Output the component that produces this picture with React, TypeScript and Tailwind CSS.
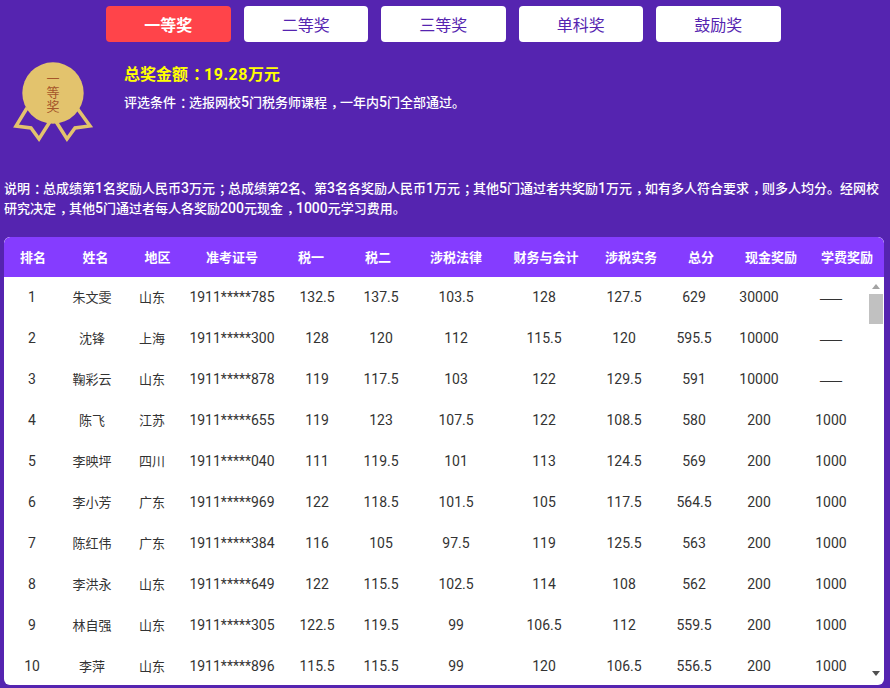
import React from 'react';

const tabs = ['一等奖', '二等奖', '三等奖', '单科奖', '鼓励奖'];

const headers = ['排名', '姓名', '地区', '准考证号', '税一', '税二', '涉税法律', '财务与会计', '涉税实务', '总分', '现金奖励', '学费奖励'];

const rows = [
  ['1', '朱文雯', '山东', '1911*****785', '132.5', '137.5', '103.5', '128', '127.5', '629', '30000', '——'],
  ['2', '沈锋', '上海', '1911*****300', '128', '120', '112', '115.5', '120', '595.5', '10000', '——'],
  ['3', '鞠彩云', '山东', '1911*****878', '119', '117.5', '103', '122', '129.5', '591', '10000', '——'],
  ['4', '陈飞', '江苏', '1911*****655', '119', '123', '107.5', '122', '108.5', '580', '200', '1000'],
  ['5', '李映坪', '四川', '1911*****040', '111', '119.5', '101', '113', '124.5', '569', '200', '1000'],
  ['6', '李小芳', '广东', '1911*****969', '122', '118.5', '101.5', '105', '117.5', '564.5', '200', '1000'],
  ['7', '陈红伟', '广东', '1911*****384', '116', '105', '97.5', '119', '125.5', '563', '200', '1000'],
  ['8', '李洪永', '山东', '1911*****649', '122', '115.5', '102.5', '114', '108', '562', '200', '1000'],
  ['9', '林自强', '山东', '1911*****305', '122.5', '119.5', '99', '106.5', '112', '559.5', '200', '1000'],
  ['10', '李萍', '山东', '1911*****896', '115.5', '115.5', '99', '120', '106.5', '556.5', '200', '1000'],
];

// digits run wider than the CJK font's, and the reference centres ，：；
const Mixed: React.FC<{ text: string }> = ({ text }) => (
  <>
    {text.split(/(\d+|[，：；])/).map((part, i) => {
      if (/^\d+$/.test(part)) {
        return <span key={i} className="font-['Roboto',sans-serif] text-[14px]">{part}</span>;
      }
      if (/^[，：；]$/.test(part)) {
        return <span key={i} className="inline-block translate-x-1">{part}</span>;
      }
      return part;
    })}
  </>
);

const Medal = () => (
  <svg width="106" height="90" viewBox="0 0 106 90" className="shrink-0">
    <g fill="none" stroke="#e3c36d" strokeWidth="3.5" strokeLinejoin="miter">
      <polyline points="27,46 16,64 31,66 39,77 51,58" />
      <polyline points="77,46 90,64 75,66 67,77 55,58" />
    </g>
    <circle cx="53" cy="31" r="30.7" fill="#e3c36d" />
    <g fill="#a5562a" fontSize="13" textAnchor="middle">
      <text x="53" y="21">一</text>
      <text x="53" y="35">等</text>
      <text x="53" y="49">奖</text>
    </g>
  </svg>
);

const cellClass = (i: number, cell: string) => {
  if (cell === '——') return "font-['Noto_Sans_CJK_SC',sans-serif] text-[14px]";
  if (i === 1 || i === 2) return 'pb-0.5 text-[13px]';
  return "font-['Roboto',sans-serif] text-[14px]";
};

export default function App() {
  return (
    <div className="h-[688px] w-[890px] overflow-hidden bg-[#5524b0] font-['Noto_Sans_CJK_SC','Liberation_Sans',sans-serif]">
      <div className="flex gap-[13px] pl-[106px] pt-1.5">
        {tabs.map((tab, i) => (
          <button
            key={tab}
            className={
              i === 0
                ? 'h-9 w-[124.5px] rounded-sm bg-[#ff444a] text-base font-bold text-white'
                : 'h-9 w-[124.5px] rounded-sm bg-white text-base text-[#5524b0]'
            }
          >
            {tab}
          </button>
        ))}
      </div>

      <div className="mt-5 flex h-[116px] items-start">
        <Medal />
        <div className="ml-[18px]">
          <h2 className="text-base leading-[22px] font-bold text-[#ffff00]">
            总奖金额<span className="inline-block translate-x-[5px]">：</span>
            <span className="font-['Roboto',sans-serif] tracking-[0.5px]">19.28</span>万元
          </h2>
          <p className="mt-1.5 text-[13px] leading-5 font-medium text-white">
            <Mixed text="评选条件：选报网校5门税务师课程，一年内5门全部通过。" />
          </p>
        </div>
      </div>

      <p className="h-[59px] px-1 text-[13px] leading-5 font-medium text-white">
        <Mixed text="说明：总成绩第1名奖励人民币3万元；总成绩第2名、第3名各奖励人民币1万元；其他5门通过者共奖励1万元，如有多人符合要求，则多人均分。经网校研究决定，其他5门通过者每人各奖励200元现金，1000元学习费用。" />
      </p>

      <div className="mx-1 h-[448px] w-[880px] overflow-hidden rounded-md bg-white">
        <div className="grid h-10 grid-cols-[58px_67px_57px_92px_66px_68px_88px_92px_78px_62px_78px_74px] items-center rounded-t-md bg-[#853cff] text-center text-[13px] font-bold text-white">
          {headers.map((h) => (
            <div key={h}>{h}</div>
          ))}
        </div>
        <div className="flex h-[408px]">
          <div className="w-[864px]">
            {rows.map((row) => (
              <div
                key={row[0]}
                className="grid h-[41px] grid-cols-[56px_64px_56px_104px_66px_62px_88px_88px_72px_68px_62px_82px] items-center text-center text-[#333333]"
              >
                {row.map((cell, i) => (
                  <div key={i} className={cellClass(i, cell)}>{cell}</div>
                ))}
              </div>
            ))}
          </div>
          <div className="flex w-4 flex-col items-center pr-px">
            <div className="mt-[7px] h-0 w-0 border-x-[4px] border-b-[5px] border-x-transparent border-b-[#a3a3a3]" />
            <div className="mt-[5px] h-[30px] w-[14px] bg-[#c1c1c1]" />
            <div className="mt-[347px] h-0 w-0 border-x-[4px] border-t-[5px] border-x-transparent border-t-[#505050]" />
          </div>
        </div>
      </div>
    </div>
  );
}
